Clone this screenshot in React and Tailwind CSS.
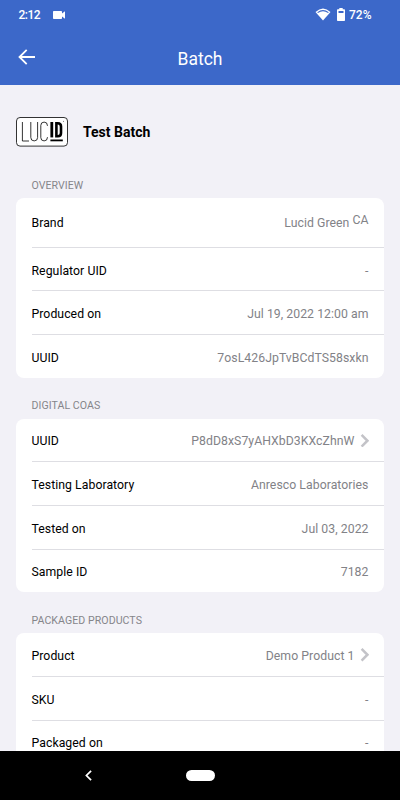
import { ChevronRight } from 'lucide-react';

const sections = [
  {
    title: 'OVERVIEW',
    rows: [
      { label: 'Brand', value: 'Lucid Green', region: 'CA' },
      { label: 'Regulator UID', value: '-' },
      { label: 'Produced on', value: 'Jul 19, 2022 12:00 am' },
      { label: 'UUID', value: '7osL426JpTvBCdTS58sxkn' },
    ],
  },
  {
    title: 'DIGITAL COAS',
    rows: [
      { label: 'UUID', value: 'P8dD8xS7yAHXbD3KXcZhnW', link: true },
      { label: 'Testing Laboratory', value: 'Anresco Laboratories' },
      { label: 'Tested on', value: 'Jul 03, 2022' },
      { label: 'Sample ID', value: '7182' },
    ],
  },
  {
    title: 'PACKAGED PRODUCTS',
    rows: [
      { label: 'Product', value: 'Demo Product 1', link: true },
      { label: 'SKU', value: '-' },
      { label: 'Packaged on', value: '-' },
    ],
  },
];

function StatusBar() {
  return (
    <div className="flex h-[29px] items-center pl-[18.5px] pr-[28.5px] text-[12px] font-medium">
      <span className="tracking-[-0.5px]">2:12</span>
      <svg viewBox="0 0 12 8" width="12" height="8" fill="currentColor" className="ml-[12.5px]">
        <path d="M.8 0h7.4q.8 0 .8.8v1.8L12 .2v7.6L9 5.4v1.8q0 .8-.8.8H.8Q0 8 0 7.2V.8Q0 0 .8 0z" />
      </svg>
      <div className="ml-auto flex items-center">
        <svg viewBox="0 0 16 13" width="16" height="13" fill="none">
          <path d="M.5 4Q8-3 15.5 4L8 12.6z" fill="currentColor" />
          <path d="M2.6 4.6Q8 .6 13.4 4.6" stroke="#3c68c9" strokeWidth="1.1" />
        </svg>
        <svg viewBox="0 0 8 13" width="8" height="13" className="ml-[6px]">
          <path d="M2.3 0h3.4v1.2h1.5q.8 0 .8.8v10.2q0 .8-.8.8H.8q-.8 0-.8-.8V2q0-.8.8-.8h1.5z" fill="currentColor" />
          <path d="M1.5 3h5v2h-5z" fill="#3c68c9" />
        </svg>
        <span className="ml-[4px] tracking-[0px]">72%</span>
      </div>
    </div>
  );
}

function Header() {
  return (
    <header className="h-[85px] flex-shrink-0 bg-[#3c68c9] text-white">
      <StatusBar />
      <div className="grid h-[56px] grid-cols-[1fr_auto_1fr] items-center px-[18px]">
        <button type="button" aria-label="Back">
          <svg viewBox="0 0 17 16" width="17" height="16" fill="none" stroke="currentColor" strokeWidth="1.8">
            <path d="M8.7.8 1.5 8l7.2 7.2M1.3 8H17" />
          </svg>
        </button>
        <h1 className="pt-[3px] text-[17.5px] leading-5">Batch</h1>
      </div>
    </header>
  );
}

function LucidLogo() {
  return (
    <svg viewBox="0 0 52 30" width="52" height="30" fill="none" stroke="#000">
      <rect x=".5" y=".5" width="51" height="28.6" rx="3.5" fill="#fff" strokeWidth=".8" />
      <g strokeWidth=".8">
        <path d="M6.4 5v19H13" />
        <path d="M14.8 5v15.5a3.4 3.4 0 0 0 6.8 0V5" />
        <path d="M31.4 9V8.4a3.3 3.3 0 0 0-6.6 0v12.2a3.3 3.3 0 0 0 6.6 0V20" />
      </g>
      <path d="M35.8 5v15.4" strokeWidth="2.8" />
      <path d="M40.4 6.2h1.4q3.2 0 3.2 3.3v6.4q0 3.3-3.2 3.3h-1.4z" strokeWidth="2.6" />
      <path d="M34.4 23.4h12.4" strokeWidth="1.8" />
      <path d="M47 4.4h1" strokeWidth=".5" />
    </svg>
  );
}

function Row({ label, value, region, link }) {
  return (
    <div className="group pl-[15.5px]">
      <div
        className={`flex items-center border-b border-[#dedee3] pr-[15.5px] group-last:h-[42.7px] group-last:border-0 ${region ? 'h-[50px] pt-[1.6px]' : 'h-[43.7px] pt-[2.8px]'}`}
      >
        <span className="text-black">{label}</span>
        <span className="ml-auto flex text-[#828287]">
          {value}
          {region && <span className="-mt-[3px] ml-[3px] mb-[3px]">{region}</span>}
        </span>
        {link && (
          <ChevronRight
            viewBox="8 5 8 14"
            className="-mt-[2px] ml-[5px] h-[13.5px] w-[9px] text-[#c3c3c8]"
            strokeWidth={2.6}
            strokeLinecap="butt"
            strokeLinejoin="miter"
          />
        )}
      </div>
    </div>
  );
}

function Section({ title, rows }) {
  return (
    <section className="mb-[20.5px]">
      <h3 className="h-[20.3px] pl-[15.5px] text-[10.6px] leading-[15px] tracking-[0.05px] text-[#85858a]">{title}</h3>
      <div className="overflow-hidden rounded-[8px] bg-white text-[12.25px] leading-4 tracking-[0.05px]">
        {rows.map((row) => (
          <Row key={row.label} {...row} />
        ))}
      </div>
    </section>
  );
}

export default function App() {
  return (
    <div className="flex h-[800px] w-[400px] flex-col overflow-hidden bg-[#f2f1f7] font-[Roboto,sans-serif]">
      <Header />
      <main className="min-h-0 flex-1 overflow-hidden px-4 pt-8">
        <div className="mb-[30.5px] flex h-[30px] items-center gap-[15px]">
          <LucidLogo />
          <h2 className="text-[14px] font-bold text-black">Test Batch</h2>
        </div>
        {sections.map((section) => (
          <Section key={section.title} {...section} />
        ))}
      </main>
      {/* Android system navigation */}
      <nav className="grid h-[49px] flex-shrink-0 grid-cols-[1fr_29px_1fr] items-center bg-black text-white">
        <svg viewBox="0 0 7 11" width="7" height="11" fill="none" stroke="currentColor" strokeWidth="1.7" className="ml-[85px]">
          <path d="M6.1.8 1.4 5.5l4.7 4.7" />
        </svg>
        <div className="h-[11px] rounded-full bg-white" />
      </nav>
    </div>
  );
}
